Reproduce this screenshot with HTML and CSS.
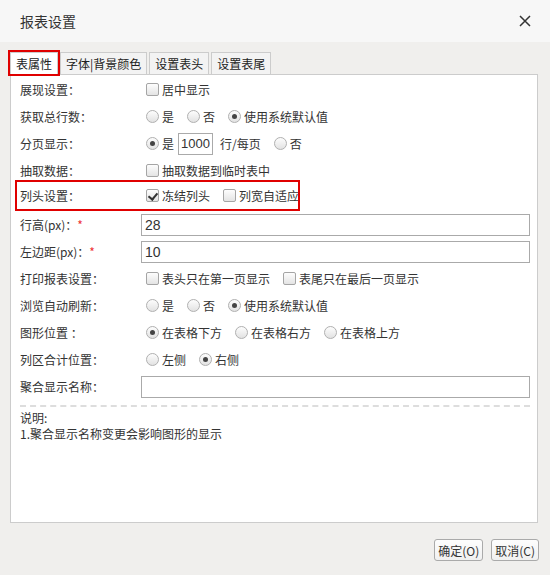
FILE: index.html
```
<!DOCTYPE html>
<html lang="zh-CN">
<head>
    <meta charset="UTF-8">
    <title>报表设置</title>
    <link rel="stylesheet" href="styles.css">
</head>
<body>

<div class="dialog">
    <div class="title-bar">
        <span class="title">报表设置</span>
        <span class="close">
            <svg width="12" height="12" viewBox="0 0 12 12"><path d="M1 1L11 11M11 1L1 11" stroke="#333" stroke-width="1.5" fill="none"/></svg>
        </span>
    </div>

    <div class="tabs">
        <div class="tab active">表属性</div>
        <div class="tab">字体|背景颜色</div>
        <div class="tab">设置表头</div>
        <div class="tab">设置表尾</div>
    </div>

    <div class="panel">
        <div class="row">
            <div class="label">展现设置：</div>
            <div class="ctrl">
                <span class="check"></span><span class="txt">居中显示</span>
            </div>
        </div>
        <div class="row">
            <div class="label">获取总行数：</div>
            <div class="ctrl">
                <span class="radio"></span><span class="txt">是</span>
                <span class="radio"></span><span class="txt">否</span>
                <span class="radio on"></span><span class="txt">使用系统默认值</span>
            </div>
        </div>
        <div class="row">
            <div class="label">分页显示：</div>
            <div class="ctrl">
                <span class="radio on"></span><span class="txt">是</span>
                <input class="small-input" type="text" value="1000">
                <span class="txt">行/每页</span>
                <span class="radio"></span><span class="txt">否</span>
            </div>
        </div>
        <div class="row">
            <div class="label">抽取数据：</div>
            <div class="ctrl">
                <span class="check"></span><span class="txt">抽取数据到临时表中</span>
            </div>
        </div>
        <div class="row mark">
            <div class="label">列头设置：</div>
            <div class="ctrl">
                <span class="check on"></span><span class="txt">冻结列头</span>
                <span class="check"></span><span class="txt">列宽自适应</span>
            </div>
        </div>
        <div class="row">
            <div class="label">行高(px)：<span class="req">*</span></div>
            <div class="ctrl">
                <input class="wide-input" type="text" value="28">
            </div>
        </div>
        <div class="row">
            <div class="label">左边距(px)：<span class="req">*</span></div>
            <div class="ctrl">
                <input class="wide-input" type="text" value="10">
            </div>
        </div>
        <div class="row">
            <div class="label">打印报表设置：</div>
            <div class="ctrl">
                <span class="check"></span><span class="txt">表头只在第一页显示</span>
                <span class="check"></span><span class="txt">表尾只在最后一页显示</span>
            </div>
        </div>
        <div class="row">
            <div class="label">浏览自动刷新：</div>
            <div class="ctrl">
                <span class="radio"></span><span class="txt">是</span>
                <span class="radio"></span><span class="txt">否</span>
                <span class="radio on"></span><span class="txt">使用系统默认值</span>
            </div>
        </div>
        <div class="row">
            <div class="label">图形位置 ：</div>
            <div class="ctrl">
                <span class="radio on"></span><span class="txt">在表格下方</span>
                <span class="radio"></span><span class="txt">在表格右方</span>
                <span class="radio"></span><span class="txt">在表格上方</span>
            </div>
        </div>
        <div class="row">
            <div class="label">列区合计位置：</div>
            <div class="ctrl">
                <span class="radio"></span><span class="txt">左侧</span>
                <span class="radio on"></span><span class="txt">右侧</span>
            </div>
        </div>
        <div class="row">
            <div class="label">聚合显示名称：</div>
            <div class="ctrl">
                <input class="wide-input" type="text" value="">
            </div>
        </div>

        <div class="note">
            <p>说明:</p>
            <p>1.聚合显示名称变更会影响图形的显示</p>
        </div>
    </div>

    <div class="footer">
        <button class="btn">确定(O)</button>
        <button class="btn">取消(C)</button>
    </div>
</div>

</body>
</html>
```

FILE: styles.css
```
* {
    box-sizing: border-box;
}
body {
    margin: 0;
    font-family: "Noto Sans CJK SC", "Liberation Sans", sans-serif;
    font-size: 12px;
    color: #333;
    background-color: #f0efed;
}
.dialog {
    width: 550px;
    height: 575px;
    background-color: #f0efed;
}
.title-bar {
    height: 42px;
    background-color: #f7f7f7;
    display: flex;
    align-items: center;
    justify-content: space-between;
    padding: 0 20px;
}
.title {
    font-size: 14px;
    color: #333;
}
.close {
    display: flex;
    margin-right: -1px;
}
.tabs {
    display: flex;
    gap: 2px;
    padding: 10px 0 0 10px;
    height: 32px;
}
.tab {
    height: 22px;
    line-height: 21px;
    padding: 0 5px;
    border: 1px solid #ccc;
    border-bottom: none;
    background-color: #f3f3f3;
    font-size: 12px;
    color: #222;
}
.tab.active {
    background-color: #fff;
    outline: 2px solid #e00000;
    position: relative;
    z-index: 1;
}
.panel {
    margin-left: 10px;
    width: 528px;
    height: 449px;
    border: 1px solid #ccc;
    background-color: #fff;
    padding: 1px 7px 0 0;
}
.row {
    display: flex;
    align-items: center;
    height: 27px;
    padding-left: 9px;
}
.row.mark {
    width: 281px;
    margin-left: 6px;
    padding-left: 3px;
    outline: 2px solid #e00000;
    margin-top: -2px;
    margin-bottom: 2px;
}
.label {
    width: 121px;
    flex-shrink: 0;
    color: #333;
}
.req {
    color: #e33;
}
.ctrl {
    display: flex;
    align-items: center;
    flex: 1;
}
.txt {
    margin-right: 8px;
    white-space: nowrap;
}
.check {
    width: 13px;
    height: 13px;
    border: 1px solid #a5a5a5;
    border-radius: 2px;
    background: linear-gradient(#fdfdfd, #e4e4e4);
    margin: 0 3px 0 5px;
    position: relative;
    flex-shrink: 0;
}
.check.on::after {
    content: "";
    position: absolute;
    left: 3px;
    top: 1px;
    width: 4px;
    height: 7px;
    border: solid #333;
    border-width: 0 2px 2px 0;
    transform: rotate(40deg);
}
.radio {
    width: 13px;
    height: 13px;
    border: 1px solid #b0b0b0;
    border-radius: 50%;
    background: linear-gradient(#fdfdfd, #e2e2e2);
    margin: 0 3px 0 5px;
    position: relative;
    flex-shrink: 0;
}
.radio.on::after {
    content: "";
    position: absolute;
    left: 3px;
    top: 3px;
    width: 5px;
    height: 5px;
    border-radius: 50%;
    background-color: #444;
}
.small-input {
    width: 35px;
    height: 22px;
    border: 1px solid #aaa;
    font-family: "Liberation Sans", sans-serif;
    font-size: 13px;
    color: #333;
    padding: 0 2px;
    margin: 0 7px 0 -4px;
}
.wide-input {
    width: 100%;
    height: 22px;
    border: 1px solid #aaa;
    font-family: "Liberation Sans", sans-serif;
    font-size: 14px;
    color: #333;
    padding: 0 3px;
    margin-left: 0;
    margin-right: -2px;
}
.note {
    margin: 5px 0 0 9px;
    padding-top: 3px;
    border-top: 2px dashed #ddd;
}
.note p {
    margin: 0;
    line-height: 16px;
}
.footer {
    display: flex;
    justify-content: flex-end;
    gap: 8px;
    padding: 16px 11px 0 0;
}
.btn {
    height: 22px;
    padding: 0 3px;
    border: 1px solid #aaa;
    border-radius: 3px;
    background: linear-gradient(#fdfdfd, #f0f0f0);
    font-family: "Noto Sans CJK SC", "Liberation Sans", sans-serif;
    font-size: 12px;
    color: #333;
}
```
